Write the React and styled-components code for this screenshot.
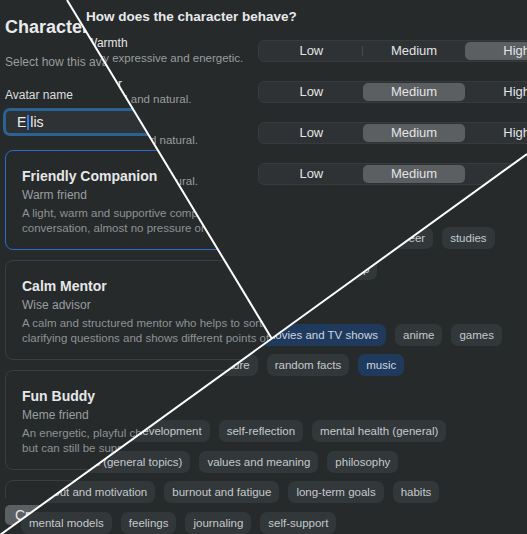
import React from "react";
import styled, { createGlobalStyle } from "styled-components";

const GlobalStyle = createGlobalStyle`
  html, body {
    margin: 0;
    padding: 0;
    background: #262a2b;
  }
  body {
    font-family: "Liberation Sans", Arial, sans-serif;
    color: #e4e6e7;
    overflow: hidden;
  }
`;

const personas = [
  {
    title: "Friendly Companion",
    role: "Warm friend",
    text: "A light, warm and supportive companion for casual\nconversation, almost no pressure or advice.",
    selected: true,
  },
  {
    title: "Calm Mentor",
    role: "Wise advisor",
    text: "A calm and structured mentor who helps to sort out thoughts, asks\nclarifying questions and shows different points of view.",
  },
  {
    title: "Fun Buddy",
    role: "Meme friend",
    text: "An energetic, playful character who jokes a lot,\nbut can still be supportive when needed.",
  },
  {
    title: "Honest Critic",
    role: "Straight talker",
    text: "Direct and honest feedback,\nwithout sugarcoating.",
  },
];

const traits = [
  { label: "Warmth", hint: "Very expressive and energetic.", value: 2 },
  { label: "Humor", hint: "Informal and natural.", value: 1 },
  { label: "Energy", hint: "Balanced and natural.", value: 1 },
  { label: "Directness", hint: "Balanced and natural.", value: 1 },
];

const levels = ["Low", "Medium", "High"];

const topicGroups = [
  {
    title: "Everyday life",
    rows: [
      ["work", "relationships", "family", "home", "dating", "money", "career", "studies"],
      ["productivity", "time management", "gym", "nutrition", "sleep"],
    ],
  },
  {
    title: "Hobbies and interests",
    rows: [
      ["travel", "food and cooking", "podcasts", "movies and TV shows", "anime", "games"],
      ["sports", "technology", "art and literature", "random facts", "music"],
    ],
  },
  {
    title: "Inner world",
    rows: [
      ["growth", "personal development", "self-reflection", "mental health (general)"],
      ["conversations (general topics)", "values and meaning", "philosophy"],
      ["workout and motivation", "burnout and fatigue", "long-term goals", "habits"],
      ["mental models", "feelings", "journaling", "self-support"],
    ],
  },
];

const activeTopics = ["movies and TV shows", "music"];

const Stage = styled.div`
  position: relative;
  width: 527px;
  height: 534px;
  overflow: hidden;
  background: #262a2b;
`;

const Layer = styled.div`
  position: absolute;
  inset: 0;
  overflow: hidden;
  background: #262a2b;
  clip-path: ${(p) => p.$clip};
`;

/* left pane */
const SetupPane = styled.div`
  width: 420px;
  height: 534px;
  box-sizing: border-box;
  padding: 16px 0 0 5px;
  display: flex;
  flex-direction: column;
`;
const PaneTitle = styled.h1`
  margin: 0;
  font-size: 18px;
  line-height: 22px;
  font-weight: 700;
  color: #e9eaeb;
  white-space: nowrap;
`;
const PaneHint = styled.div`
  margin-top: 16px;
  font-size: 12px;
  line-height: 16px;
  color: #9a9d9f;
  white-space: nowrap;
`;
const FieldLabel = styled.div`
  margin-top: 16.5px;
  font-size: 12px;
  line-height: 16px;
  color: #dcdedf;
`;
const NameField = styled.div`
  margin: 5.5px 0 0 -2px;
  width: 380px;
  height: 28px;
  box-sizing: border-box;
  border: 3px solid #2b6294;
  border-radius: 7px;
  background: #2e3234;
  padding-left: 11px;
  display: flex;
  align-items: center;
  font-size: 14px;
  color: #eceded;
`;
const Caret = styled.span`
  display: inline-block;
  width: 2px;
  height: 15px;
  margin: 0 1px;
  background: #2f7ae5;
`;
const CardList = styled.div`
  margin-top: 14px;
  height: 348px;
  overflow: hidden;
  display: flex;
  flex-direction: column;
  gap: 10px;
`;
const Card = styled.div`
  width: 400px;
  height: 100px;
  box-sizing: border-box;
  padding: 16px 16px 0;
  border-radius: 8px;
  border: 1px solid ${(p) => (p.$selected ? "#2a6cc8" : "#393e40")};
  background: #262a2b;
  flex-shrink: 0;
`;
const CardTitle = styled.div`
  font-size: 14px;
  line-height: 18px;
  font-weight: 700;
  color: #e6e7e8;
`;
const CardRole = styled.div`
  margin-top: 2px;
  font-size: 12px;
  line-height: 16px;
  color: #9b9ea0;
`;
const CardText = styled.div`
  margin-top: 3px;
  font-size: 11.5px;
  line-height: 14.5px;
  color: #8f9294;
  white-space: pre;
`;
const Footer = styled.div`
  padding-top: 7px;
  display: flex;
`;
const CreateButton = styled.button`
  height: 20px;
  padding: 0 10px;
  border: 0;
  border-radius: 5px;
  background: #5c6062;
  color: #e6e7e8;
  font-family: inherit;
  font-size: 14px;
`;

/* behaviour pane */
const BehaviorPane = styled.div`
  width: 600px;
  padding: 8px 0 0 86px;
`;
const SectionTitle = styled.h2`
  margin: 0;
  font-size: 13.5px;
  line-height: 18px;
  font-weight: 700;
  color: #e8e9ea;
`;
const TraitList = styled.div`
  margin-top: 9.5px;
  display: flex;
  flex-direction: column;
  gap: 11px;
`;
const TraitRow = styled.div`
  display: grid;
  grid-template-columns: 172px 312px;
  align-items: center;
  height: 30px;
`;
const TraitLabel = styled.div`
  font-size: 12px;
  line-height: 15px;
  color: #e2e4e5;
`;
const TraitHint = styled.div`
  font-size: 11.5px;
  line-height: 15px;
  color: #9a9d9f;
  white-space: nowrap;
`;
const Segmented = styled.div`
  display: flex;
  height: 22px;
  box-sizing: border-box;
  padding: 1px;
  border-radius: 6px;
  background: #2e3234;
  border: 1px solid #373b3d;
`;
const Segment = styled.div`
  position: relative;
  flex: 1;
  display: flex;
  align-items: center;
  justify-content: center;
  border-radius: 5px;
  font-size: 13px;
  color: #e2e4e5;
  background: ${(p) => (p.$active ? "#5b5f61" : "transparent")};

  &::after {
    content: "";
    display: ${(p) => (p.$divider ? "block" : "none")};
    position: absolute;
    right: 0;
    top: 4px;
    bottom: 4px;
    width: 1px;
    background: #45494b;
  }
`;

/* topics pane */
const TopicsPane = styled.div`
  padding: 199px 0 0 21px;
  display: flex;
  flex-direction: column;
  gap: 16px;
`;
const GroupTitle = styled.div`
  margin-bottom: 12px;
  font-size: 12px;
  line-height: 16px;
  font-weight: 700;
  color: #e0e2e3;
`;
const ChipRows = styled.div`
  display: flex;
  flex-direction: column;
  gap: 8.5px;
`;
const ChipRow = styled.div`
  display: flex;
  gap: 9px;
`;
const Chip = styled.span`
  flex-shrink: 0;
  height: 22px;
  padding: 0 8px;
  border-radius: 7px;
  font-size: 11.5px;
  line-height: 22px;
  white-space: nowrap;
  background: ${(p) => (p.$on ? "#1f3a5c" : "#32373a")};
  color: ${(p) => (p.$on ? "#cdd6e1" : "#c6c9cb")};
`;

const Cuts = styled.svg`
  position: absolute;
  inset: 0;
  pointer-events: none;
`;

const SetupView = () => (
  <SetupPane>
    <PaneTitle>Character setup</PaneTitle>
    <PaneHint>Select how this avatar should talk and behave with you.</PaneHint>
    <FieldLabel>Avatar name</FieldLabel>
    <NameField>
      E<Caret />lis
    </NameField>
    <CardList>
      {personas.map((p) => (
        <Card key={p.title} $selected={p.selected}>
          <CardTitle>{p.title}</CardTitle>
          <CardRole>{p.role}</CardRole>
          <CardText>{p.text}</CardText>
        </Card>
      ))}
    </CardList>
    <Footer>
      <CreateButton>Create</CreateButton>
    </Footer>
  </SetupPane>
);

const BehaviorView = () => (
  <BehaviorPane>
    <SectionTitle>How does the character behave?</SectionTitle>
    <TraitList>
      {traits.map((t) => (
        <TraitRow key={t.label}>
          <div>
            <TraitLabel>{t.label}</TraitLabel>
            <TraitHint>{t.hint}</TraitHint>
          </div>
          <Segmented>
            {levels.map((l, i) => (
              <Segment
                key={l}
                $active={i === t.value}
                $divider={i < 2 && i !== t.value && i + 1 !== t.value}
              >
                {l}
              </Segment>
            ))}
          </Segmented>
        </TraitRow>
      ))}
    </TraitList>
  </BehaviorPane>
);

const TopicsView = () => (
  <TopicsPane>
    {topicGroups.map((g) => (
      <section key={g.title}>
        <GroupTitle>{g.title}</GroupTitle>
        <ChipRows>
          {g.rows.map((row, i) => (
            <ChipRow key={i}>
              {row.map((c) => (
                <Chip key={c} $on={activeTopics.includes(c)}>
                  {c}
                </Chip>
              ))}
            </ChipRow>
          ))}
        </ChipRows>
      </section>
    ))}
  </TopicsPane>
);

export default function App() {
  return (
    <>
      <GlobalStyle />
      <Stage>
        <Layer $clip="polygon(0 0, 67px 0, 272px 339px, 0 535px)">
          <SetupView />
        </Layer>
        <Layer $clip="polygon(67px 0, 527px 0, 527px 154px, 272px 339px)">
          <BehaviorView />
        </Layer>
        <Layer $clip="polygon(0 535px, 527px 154px, 527px 534px, 0 534px)">
          <TopicsView />
        </Layer>
        <Cuts width="527" height="534" viewBox="0 0 527 534">
          <line x1="67" y1="0" x2="272" y2="339" stroke="#fff" strokeWidth="2" />
          <line x1="0" y1="535" x2="527" y2="154" stroke="#fff" strokeWidth="2" />
        </Cuts>
      </Stage>
    </>
  );
}
